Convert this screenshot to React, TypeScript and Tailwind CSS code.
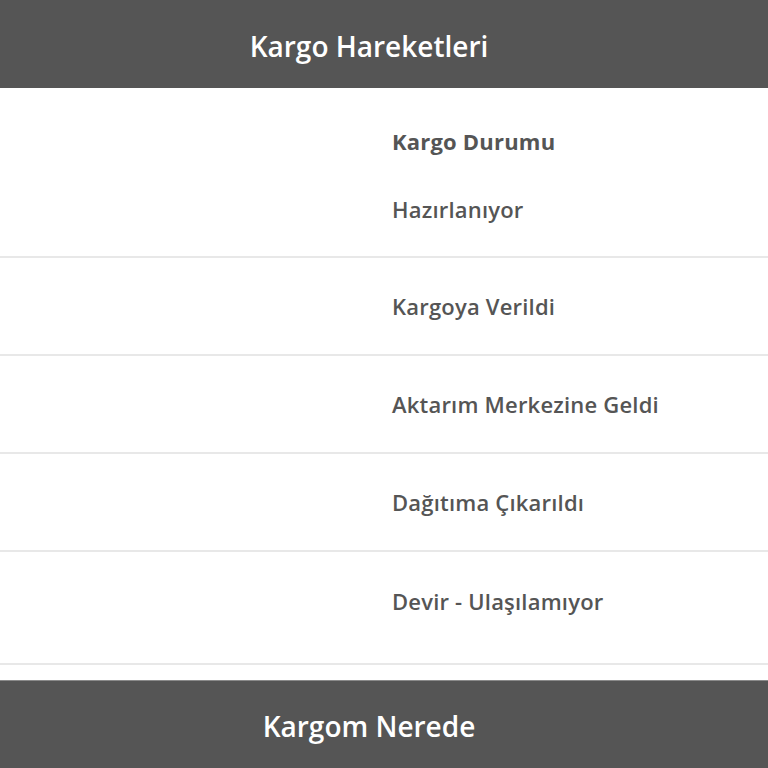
const rows = ["Kargoya Verildi", "Aktarım Merkezine Geldi", "Dağıtıma Çıkarıldı"]

export default function App() {
    return (
        <div className="w-[768px] h-[768px] overflow-hidden bg-white text-[#555555]" style={{ fontFamily: '"Open Sans", "Noto Sans", sans-serif' }}>
            <header className="h-[88px] bg-[#555555] flex items-center justify-center pr-[30px]">
                <h1 className="text-[28px] font-semibold text-white mt-[4px]">Kargo Hareketleri</h1>
            </header>
            <div className="flex flex-col">
                <div className="h-[170px] border-b-2 border-[#e8e8e8] flex">
                    <div className="w-1/2" />
                    <div className="w-1/2 pl-2 pt-[38px] flex flex-col gap-[38px] text-[22px] leading-[30px] tracking-[0.2px]">
                        <span className="font-bold">Kargo Durumu</span>
                        <span className="font-semibold">Hazırlanıyor</span>
                    </div>
                </div>
                {rows.map((r) => (
                    <div key={r} className="h-[98px] border-b-2 border-[#e8e8e8] flex items-center">
                        <div className="w-1/2" />
                        <div className="w-1/2 pl-2 text-[22px] leading-[30px] font-semibold tracking-[0.2px]">{r}</div>
                    </div>
                ))}
                <div className="h-[113px] border-b-2 border-[#e8e8e8] flex">
                    <div className="w-1/2" />
                    <div className="w-1/2 pl-2 pt-[34px] text-[22px] leading-[30px] font-semibold tracking-[0.2px]">Devir - Ulaşılamıyor</div>
                </div>
            </div>
            <footer className="mt-[15px] h-[90px] bg-[#555555] border-t border-[#8a8a8a] flex items-center justify-center pr-[30px]">
                <h2 className="text-[28px] font-semibold text-white">Kargom Nerede</h2>
            </footer>
        </div>
    )
}
